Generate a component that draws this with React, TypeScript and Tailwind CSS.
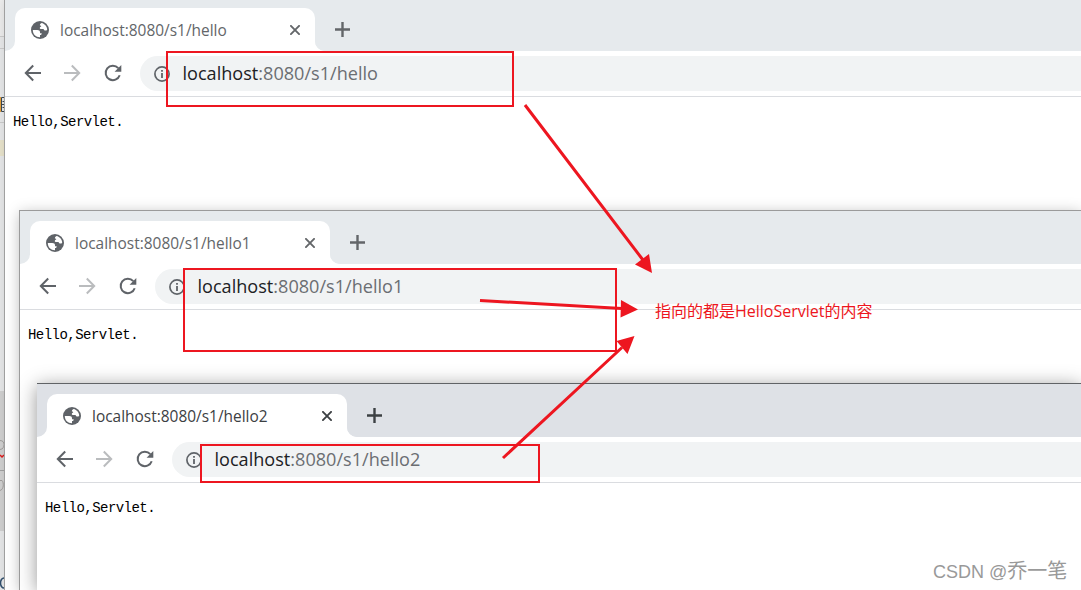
import React from "react";

interface BrowserWindowProps {
  path: string;
  className: string;
  active?: boolean;
}

const ui = "font-['Open_Sans','Noto_Sans_CJK_SC',sans-serif]";

const GlobeIcon: React.FC = () => (
  <svg viewBox="0 0 18 18" className="size-[18px]">
    <circle cx="9" cy="9" r="9" fill="#5f6368" />
    <path
      d="M10.500 2.100C14 2.800 16.200 5.800 16.200 8.800c-.4.600-1 .8-1.800.8-1.100 0-1.800-.6-1.800-1.500H10.300c-1 0-1.500-.5-1.500-1.200 0-.8.600-1.200 1.400-1.200 0-.8-.5-1.200-1.300-1.200 0-1.100.6-2 1.600-2.400z"
      fill="#fff"
    />
    <path
      d="M1.800 9h4.400c1.900 0 2.800.9 2.800 2.300v.9h1.700c0 1.300-.6 1.900-1.700 1.900v2.100C5 16.300 1.800 13.300 1.800 9z"
      fill="#fff"
    />
  </svg>
);

const BackIcon: React.FC<{ className?: string }> = ({ className }) => (
  <svg viewBox="0 0 18 18" className={`size-[18px] ${className ?? ""}`} fill="none" stroke="currentColor" strokeWidth="2">
    <path d="M17 9H2M9.200 1.500 1.800 9l7.400 7.500" />
  </svg>
);

const ReloadIcon: React.FC = () => (
  <svg viewBox="0 0 18 18" className="size-[18px]" fill="none">
    <path d="M15.700 11.200A7.200 7.200 0 1 1 14.300 4.200" stroke="#5f6368" strokeWidth="2" />
    <path d="M17.300 1v6.700h-6.700z" fill="#5f6368" />
  </svg>
);

const InfoIcon: React.FC = () => (
  <svg viewBox="0 0 16 16" className="size-4" fill="none">
    <circle cx="8" cy="8" r="7.100" stroke="#5f6368" strokeWidth="1.700" />
    <path d="M7.100 7h1.800v5H7.100zM7.100 4h1.800v1.700H7.100z" fill="#5f6368" />
  </svg>
);

const BrowserWindow: React.FC<BrowserWindowProps> = ({ path, className, active }) => {
  const strip = active ? "bg-[#dee1e6]" : "bg-[#e6eaed]";
  const curve = active ? "fill-[#dee1e6]" : "fill-[#e6eaed]";
  const ink = active ? "text-[#3c4043]" : "text-[#636669]";

  return (
    <div className={`absolute right-0 bottom-0 bg-white ${className}`}>
      <div className={`flex h-[53px] pt-2.5 ${strip}`}>
        <svg viewBox="0 0 10 43" className="h-[43px] w-2.5">
          <path d="M0 43A10 10 0 0 0 10 33V43z" fill="#fff" />
        </svg>
        <div className={`flex h-[43px] w-[300px] items-center rounded-t-[10px] bg-white pl-4 ${ink}`}>
          <GlobeIcon />
          <span className={`ml-[11px] flex-1 pt-0.5 text-[15.450px] whitespace-nowrap ${ui}`}>
            localhost:8080{path}
          </span>
          <svg viewBox="0 0 10 10" className="mr-[15px] size-2.5" stroke="currentColor" strokeWidth="1.900">
            <path d="M.3.3l9.400 9.400M9.700.3.3 9.700" />
          </svg>
        </div>
        <svg viewBox="0 0 10 43" className="h-[43px] w-2.5">
          <path d="M0 33A10 10 0 0 0 10 43H0z" fill="#fff" />
          <path d="M0 33A10 10 0 0 0 10 43V0H0z" className={curve} />
        </svg>
        <svg viewBox="0 0 15 15" className={`mt-3.5 ml-[10px] size-[15px] ${ink}`} stroke="currentColor" strokeWidth="2.400">
          <path d="M7.500 0v15M0 7.500h15" />
        </svg>
      </div>
      <div className="flex h-[46px] items-center border-b border-[#dadce0] pl-[18px] text-[#5f6368]">
        <div className="flex pb-px pl-px">
          <BackIcon />
          <BackIcon className="mr-[23px] ml-[21px] rotate-180 text-[#babcbe]" />
          <ReloadIcon />
        </div>
        <div className="ml-[18px] flex h-[35px] flex-1 items-center rounded-l-full bg-[#f1f3f4] pl-[14px]">
          <InfoIcon />
          <span className={`ml-[12.500px] text-[18.100px] whitespace-nowrap ${ui}`}>
            <span className="text-[#202124]">localhost</span>
            <span className="text-[#6b6e72]">:8080{path}</span>
          </span>
        </div>
      </div>
      <pre className="pt-[15px] pl-2 font-['Liberation_Mono',monospace] text-[14px] leading-5 tracking-[-0.540px] text-black">
        Hello,Servlet.
      </pre>
    </div>
  );
};

// Slice of the editor that stays visible behind the browser windows
const EditorEdge: React.FC = () => (
  <div className="flex h-full w-1 flex-col overflow-hidden bg-[#ebeced]">
    <div className="h-9 shrink-0 bg-[#f0f0f0]" />
    <div className="h-[13px] shrink-0 border-y border-[#cfcfcf]" />
    <svg viewBox="0 0 4 15" className="mt-12 h-[15px] w-1 shrink-0" fill="none">
      <path d="M.5 0v15" stroke="#e8a33d" />
      <path d="M4 .5H1.500v14H4M2 7.500h2M2.500 4.500H4M2.500 10.500H4" stroke="#3c4a55" />
    </svg>
    <div className="mt-2.5 h-px shrink-0 bg-[#cfcfcf]" />
    <div className="mt-[17px] h-4 shrink-0 bg-[#ece7cf]" />
    <div className="mt-[235px] h-[140px] shrink-0 bg-[#d4d4d4]">
      <svg viewBox="0 0 4 140" className="h-[140px] w-1" fill="none">
        <path d="M0 49.500c3 0 4 2 4 4s-1 5-4 5M0 89.500h2c2 2 2 9-2 10" stroke="#a5a2a0" />
        <path d="M0 64l2 2 2-2" stroke="#e21b1b" strokeWidth="1.500" />
        <path d="M0 79.500h4" stroke="#a5a5a5" />
      </svg>
    </div>
    <svg viewBox="0 0 4 12" className="mt-[46px] h-3 w-1 shrink-0" fill="none">
      <path d="M5 1C-1 0-1 12 5 11" stroke="#31506f" strokeWidth="1.500" />
    </svg>
  </div>
);

const App: React.FC = () => {
  return (
    <div className="relative h-[590px] w-[1081px] overflow-hidden bg-white">
      <EditorEdge />
      <BrowserWindow
        path="/s1/hello"
        className="-top-0.5 left-[5px] shadow-[0_0_0_1px_#a0a0a0,0_0_14px_rgba(0,0,0,0.15)]"
      />
      <BrowserWindow
        path="/s1/hello1"
        className="top-[211px] left-5 shadow-[0_0_0_1px_#9b9b9b,0_2px_14px_rgba(0,0,0,0.28)]"
      />
      <BrowserWindow
        path="/s1/hello2"
        active
        className="top-[384px] left-[37px] shadow-[0_-1px_0_0_#606366,0_2px_18px_rgba(0,0,0,0.42)]"
      />

      <div className="absolute top-[51px] left-[166px] h-14 w-[348px] border-2 border-[#ed1620]" />
      <div className="absolute top-[268px] left-[183px] h-[84px] w-[434px] border-2 border-[#ed1620]" />
      <div className="absolute top-[444px] left-[200px] h-[39px] w-[340px] border-2 border-[#ed1620]" />
      <svg viewBox="0 0 1081 590" className="absolute inset-0 h-[590px] w-[1081px]" fill="#ed1620">
        <path
          d="M525 105 643 260M480 300.500 622 308.500M503 458 622 347.500"
          stroke="#ed1620"
          strokeWidth="3"
          fill="none"
        />
        <path d="M652 273 635 264.500 649 254zM638 309.500 621 300 620.500 317.500zM634.500 336 616.500 341 627.500 354z" />
      </svg>
      <p className={`absolute top-[299px] left-[655px] text-base leading-6 whitespace-nowrap text-[#ed1620] ${ui}`}>
        指向的都是HelloServlet的内容
      </p>
      <p className="absolute top-[556px] left-[933px] font-['Liberation_Sans','Noto_Sans_CJK_SC',sans-serif] text-xl leading-[30px] whitespace-nowrap text-[#999]">
        <span className="text-[18px]">CSDN @</span>乔一笔
      </p>
    </div>
  );
};

export default App;
